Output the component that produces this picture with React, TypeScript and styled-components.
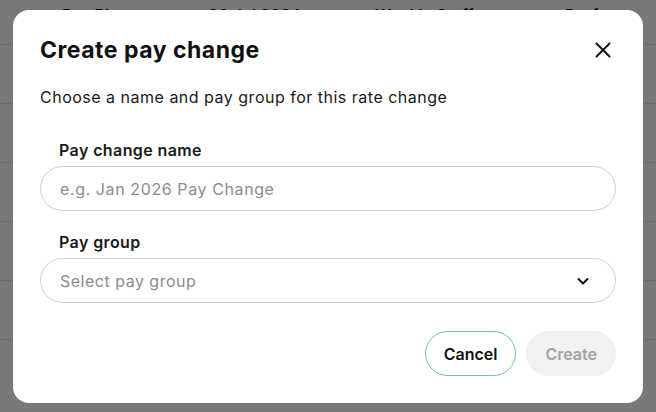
import React, { useState } from 'react'

import styled, { createGlobalStyle } from 'styled-components'

const GlobalStyle = createGlobalStyle`
  * {
    box-sizing: border-box;
  }

  body {
    margin: 0;
    font-family: Inter, 'Noto Sans', sans-serif;
    color: #111;
    background: #fff;
  }
`

// the page behind the dialog, only the first row peeks out above it
const rows = [
  ['Pay Rise', '30 Jul 2024', 'Weekly Staff', 'Draft'],
  [],
  [],
  [],
  [],
  [],
  [],
]

export default function App() {
  const [name, setName] = useState('')
  const [group, setGroup] = useState('')

  return (
    <>
      <GlobalStyle />
      <Page>
        {rows.map((row, i) => (
          <TableRow key={i}>
            {row.map((cell, j) => (
              <TableCell key={j}>{cell}</TableCell>
            ))}
          </TableRow>
        ))}
      </Page>
      <Overlay>
        <Dialog>
          <DialogHeader>
            <Title>Create pay change</Title>
            <CloseButton aria-label="Close">
              <svg width="16" height="16" viewBox="0 0 16 16" fill="none">
                <path
                  d="M1.5 1.5L14.5 14.5M14.5 1.5L1.5 14.5"
                  stroke="#111"
                  strokeWidth="2"
                  strokeLinecap="round"
                />
              </svg>
            </CloseButton>
          </DialogHeader>
          <Description>Choose a name and pay group for this rate change</Description>
          <Field>
            <Label htmlFor="pay-change-name">Pay change name</Label>
            <Input
              id="pay-change-name"
              placeholder="e.g. Jan 2026 Pay Change"
              value={name}
              onChange={e => setName(e.target.value)}
            />
          </Field>
          <Field>
            <Label htmlFor="pay-group">Pay group</Label>
            <SelectBox id="pay-group" $empty={!group} onClick={() => setGroup(group)}>
              <span>{group || 'Select pay group'}</span>
              <svg width="14" height="14" viewBox="0 0 14 14" fill="none">
                <path
                  d="M2.5 5L7 9.5L11.5 5"
                  stroke="#111"
                  strokeWidth="2"
                  strokeLinecap="round"
                  strokeLinejoin="round"
                />
              </svg>
            </SelectBox>
          </Field>
          <Footer>
            <Button $variant="outline">Cancel</Button>
            <Button $variant="primary" disabled={!name || !group}>
              Create
            </Button>
          </Footer>
        </Dialog>
      </Overlay>
    </>
  )
}

// styled component
const Page = styled.div`
  width: 656px;
  height: 412px;
  overflow: hidden;
  margin-top: -14px;
`

const TableRow = styled.div`
  display: grid;
  grid-template-columns: 146px 167px 190px 1fr;
  align-items: center;
  height: 59px;
  padding-left: 62px;
  border-bottom: 1px solid #e4e4e4;
`

const TableCell = styled.div`
  font-size: 16px;
  font-weight: 600;
  color: #111;
`

const Overlay = styled.div`
  position: fixed;
  inset: 0;
  background: rgba(0, 0, 0, 0.53);
  display: flex;
  justify-content: center;
  padding-top: 10px;
`

const Dialog = styled.div`
  width: 630px;
  height: 393px;
  background: #fff;
  border-radius: 16px;
  padding: 24px 27px 0 27px;
  display: flex;
  flex-direction: column;
`

const DialogHeader = styled.div`
  display: flex;
  align-items: center;
  justify-content: space-between;
  height: 32px;
`

const Title = styled.h2`
  margin: 0;
  font-size: 23px;
  font-weight: 700;
  letter-spacing: 0.5px;
`

const CloseButton = styled.button`
  display: flex;
  align-items: center;
  justify-content: center;
  width: 28px;
  height: 28px;
  margin-right: -1px;
  padding: 0;
  border: none;
  background: none;
  cursor: pointer;
`

const Description = styled.p`
  margin: 19px 0 0;
  font-size: 16px;
  line-height: 24px;
  letter-spacing: 0.5px;
  color: #1a1a1a;
`

const Field = styled.div`
  display: flex;
  flex-direction: column;
  gap: 4px;
  margin-top: 29px;

  & + & {
    margin-top: 19px;
  }
`

const Label = styled.label`
  padding-left: 19px;
  font-size: 16px;
  font-weight: 600;
  line-height: 24px;
  letter-spacing: 0.4px;
  color: #1a1a1a;
`

const Input = styled.input`
  height: 45px;
  padding: 0 19px;
  border: 1px solid #cfcfcf;
  border-radius: 23px;
  font-family: inherit;
  font-size: 16px;
  letter-spacing: 0.6px;
  color: #111;
  outline: none;

  &::placeholder {
    color: #8c8c8c;
  }
`

const SelectBox = styled.button<{ $empty: boolean }>`
  display: flex;
  align-items: center;
  justify-content: space-between;
  height: 45px;
  padding: 0 25px 0 19px;
  border: 1px solid #cfcfcf;
  border-radius: 23px;
  background: #fff;
  font-family: inherit;
  font-size: 16px;
  letter-spacing: 0.5px;
  color: ${p => (p.$empty ? '#8c8c8c' : '#111')};
  text-align: left;
  cursor: pointer;
`

const Footer = styled.div`
  display: flex;
  justify-content: flex-end;
  gap: 10px;
  margin-top: 28px;
`

const Button = styled.button<{ $variant: 'outline' | 'primary' }>`
  height: 45px;
  padding: 0 18px;
  border-radius: 23px;
  font-family: inherit;
  font-size: 16px;
  font-weight: 600;
  cursor: pointer;
  border: 1px solid ${p => (p.$variant === 'outline' ? '#7cc68a' : '#f1f1f1')};
  background: ${p => (p.$variant === 'outline' ? '#fff' : '#2e9e4d')};
  color: ${p => (p.$variant === 'outline' ? '#111' : '#fff')};

  &:disabled {
    background: #f1f1f1;
    border-color: #f1f1f1;
    color: #a3a3a3;
    cursor: default;
  }
`
